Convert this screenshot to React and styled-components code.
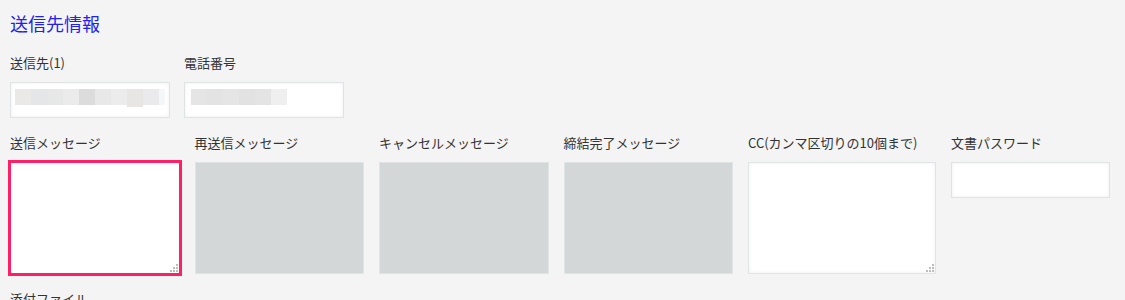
import React from "react";
import styled, { createGlobalStyle } from "styled-components";

const Global = createGlobalStyle`
  html, body { margin: 0; padding: 0; background: #f4f4f4; }
  body { font-family: "Noto Sans CJK JP", "Noto Sans", sans-serif; color: #333; }
`;

const Page = styled.div`
  padding: 11px 10px 0;
  height: 289px;
  overflow: hidden;
  background: #f4f4f4;
`;

const Heading = styled.h2`
  margin: 0 0 19px;
  font-size: 18px;
  line-height: 24px;
  font-weight: 400;
  color: #2121f0;
`;

const Row = styled.div`
  display: flex;
  align-items: flex-start;
  gap: ${(p) => p.$gap}px;
  margin-bottom: 16px;
`;

const Field = styled.div`
  flex: none;
  width: ${(p) => p.$w}px;
`;

const Label = styled.div`
  font-size: 13px;
  line-height: 18px;
  color: #333;
  margin-bottom: 10px;
  white-space: nowrap;
`;

const InputBox = styled.div`
  box-sizing: border-box;
  height: 36px;
  background: #fff;
  border: 1px solid #e0e3e3;
  box-shadow: inset 0 0 4px rgba(0, 0, 0, 0.06);
  display: flex;
  align-items: flex-start;
  padding: 6px 0 0 ${(p) => p.$pad}px;
`;

const Block = styled.span`
  flex: none;
  display: block;
  width: ${(p) => p.$w}px;
  height: ${(p) => p.$h || 16}px;
  background: ${(p) => p.$c};
`;

const AreaWrap = styled.div`
  position: relative;
  width: 100%;
`;

const Area = styled.textarea`
  display: block;
  box-sizing: border-box;
  width: 100%;
  height: 112px;
  margin: 0;
  padding: 4px;
  resize: none;
  outline: none;
  font: inherit;
  border: 1px solid ${(p) => (p.$focused ? "#ff1f66" : "#e1e4e4")};
  background: ${(p) => (p.disabled ? "#d3d7d8" : "#fff")};
  box-shadow: ${(p) =>
    p.$focused ? "0 0 0 2px #ff1f66" : p.disabled ? "none" : "inset 0 0 4px rgba(0,0,0,0.06)"};
`;

const PassInput = styled.input`
  display: block;
  box-sizing: border-box;
  width: 100%;
  height: 36px;
  margin: 0;
  padding: 0 6px;
  outline: none;
  font: inherit;
  background: #fff;
  border: 1px solid #e0e3e3;
  box-shadow: inset 0 0 4px rgba(0, 0, 0, 0.06);
`;

const Grip = styled.svg`
  position: absolute;
  right: 2px;
  bottom: 2px;
  pointer-events: none;
`;

const ResizeGrip = () => (
  <Grip width="8" height="8" viewBox="0 0 8 8">
    <g fill="#bdbdbd">
      <rect x="6" y="0" width="2" height="2" />
      <rect x="3" y="3" width="2" height="2" />
      <rect x="6" y="3" width="2" height="2" />
      <rect x="0" y="6" width="2" height="2" />
      <rect x="3" y="6" width="2" height="2" />
      <rect x="6" y="6" width="2" height="2" />
    </g>
  </Grip>
);

const nameBlocks = [
  { w: 16, c: "#ebe9e7" },
  { w: 16, c: "#e4e6e8" },
  { w: 16, c: "#e6e8e8" },
  { w: 16, c: "#ebebeb" },
  { w: 16, c: "#dcdcdc" },
  { w: 16, c: "#e8e8e8" },
  { w: 16, c: "#ececec" },
  { w: 16, c: "#e8e6e4", h: 18 },
  { w: 16, c: "#eaeaec" },
  { w: 6, c: "#f5f6f8" },
];

const phoneBlocks = [
  { w: 16, c: "#e5e5e5" },
  { w: 16, c: "#e3e3e3" },
  { w: 16, c: "#e5e5e5" },
  { w: 16, c: "#e2e2e2" },
  { w: 16, c: "#e4e4e4" },
  { w: 16, c: "#efefef" },
];

const messages = [
  { label: "送信メッセージ", focused: true },
  { label: "再送信メッセージ", disabled: true },
  { label: "キャンセルメッセージ", disabled: true },
  { label: "締結完了メッセージ", disabled: true },
];

export default function App() {
  return (
    <>
      <Global />
      <Page>
        <Heading>送信先情報</Heading>
        <Row $gap={14}>
          <Field $w={160}>
            <Label>送信先(1)</Label>
            <InputBox $pad={4}>
              {nameBlocks.map((b, i) => (
                <Block key={i} $w={b.w} $h={b.h} $c={b.c} />
              ))}
            </InputBox>
          </Field>
          <Field $w={160}>
            <Label>電話番号</Label>
            <InputBox $pad={6}>
              {phoneBlocks.map((b, i) => (
                <Block key={i} $w={b.w} $c={b.c} />
              ))}
            </InputBox>
          </Field>
        </Row>
        <Row $gap={15}>
          {messages.map((m) => (
            <Field key={m.label} $w={169.5}>
              <Label>{m.label}</Label>
              <AreaWrap>
                <Area $focused={m.focused} disabled={m.disabled} />
                {!m.disabled && <ResizeGrip />}
              </AreaWrap>
            </Field>
          ))}
          <Field $w={188}>
            <Label>CC(カンマ区切りの10個まで)</Label>
            <AreaWrap>
              <Area />
              <ResizeGrip />
            </AreaWrap>
          </Field>
          <Field $w={159}>
            <Label>文書パスワード</Label>
            <PassInput type="password" />
          </Field>
        </Row>
        <Row $gap={15}>
          <Field $w={200}>
            <Label>添付ファイル</Label>
          </Field>
        </Row>
      </Page>
    </>
  );
}
